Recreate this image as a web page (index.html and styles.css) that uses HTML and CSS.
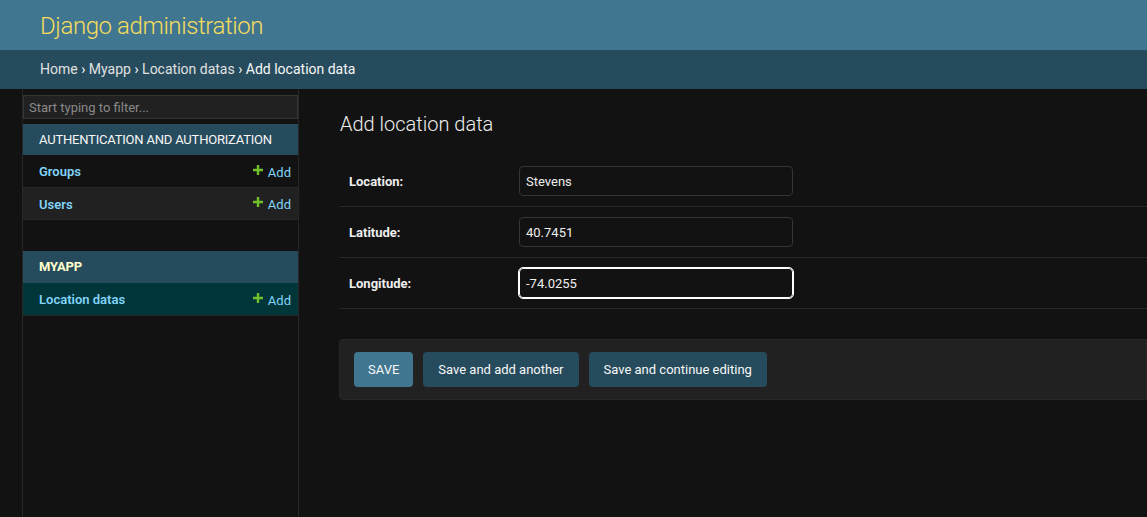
FILE: index.html
```html
<!DOCTYPE html>
<html lang="en">
<head>
<meta charset="utf-8">
<title>Add location data | Django site admin</title>
<link rel="stylesheet" href="styles.css">
</head>
<body>
<div class="container">
  <header class="header">
    <div class="branding">Django administration</div>
  </header>
  <nav class="breadcrumbs"><a href="#">Home</a> › <a href="#">Myapp</a> › <a href="#">Location datas</a> › Add location data</nav>
  <div class="main">
    <div class="toggle-nav"></div>
    <aside class="sidebar">
      <input class="nav-filter" type="search" placeholder="Start typing to filter...">
      <table class="module">
        <caption class="caption">AUTHENTICATION AND AUTHORIZATION</caption>
        <tbody>
          <tr class="row">
            <th class="row-name"><a href="#">Groups</a></th>
            <td class="row-add"><a href="#" class="addlink"><svg class="plus" viewBox="0 0 10 10" width="10" height="10"><path d="M3.8 0h2.4v3.8H10v2.4H6.2V10H3.8V6.2H0V3.8h3.8z" fill="#70bf2b"/></svg>Add</a></td>
          </tr>
          <tr class="row row-hover">
            <th class="row-name"><a href="#">Users</a></th>
            <td class="row-add"><a href="#" class="addlink"><svg class="plus" viewBox="0 0 10 10" width="10" height="10"><path d="M3.8 0h2.4v3.8H10v2.4H6.2V10H3.8V6.2H0V3.8h3.8z" fill="#70bf2b"/></svg>Add</a></td>
          </tr>
        </tbody>
      </table>
      <table class="module">
        <caption class="caption current">MYAPP</caption>
        <tbody>
          <tr class="row row-selected">
            <th class="row-name"><a href="#">Location datas</a></th>
            <td class="row-add"><a href="#" class="addlink"><svg class="plus" viewBox="0 0 10 10" width="10" height="10"><path d="M3.8 0h2.4v3.8H10v2.4H6.2V10H3.8V6.2H0V3.8h3.8z" fill="#70bf2b"/></svg>Add</a></td>
          </tr>
        </tbody>
      </table>
    </aside>
    <main class="content">
      <h1 class="title">Add location data</h1>
      <form class="form">
        <div class="form-row">
          <label class="label">Location:</label>
          <input class="field" type="text" value="Stevens">
        </div>
        <div class="form-row">
          <label class="label">Latitude:</label>
          <input class="field" type="text" value="40.7451">
        </div>
        <div class="form-row">
          <label class="label">Longitude:</label>
          <input class="field field-focus" type="text" value="-74.0255">
        </div>
        <div class="submit-row">
          <button type="button" class="btn btn-default">SAVE</button>
          <button type="button" class="btn">Save and add another</button>
          <button type="button" class="btn">Save and continue editing</button>
        </div>
      </form>
    </main>
  </div>
</div>
</body>
</html>
```

FILE: styles.css
```css
* { box-sizing: border-box; }
html, body {
  margin: 0;
  padding: 0;
  height: 100%;
  overflow: hidden;
}
body {
  background: #121212;
  color: #eeeeee;
  font-family: Roboto, "Noto Sans", "Liberation Sans", sans-serif;
  font-size: 14px;
}
a { text-decoration: none; }

.container {
  display: flex;
  flex-direction: column;
  height: 100%;
}

.header {
  background: #417690;
  height: 50px;
  padding: 0 40px;
  display: flex;
  align-items: center;
}
.branding {
  color: #f5dd5d;
  font-size: 24px;
  font-weight: 300;
  line-height: 30px;
  letter-spacing: -0.4px;
  margin-top: 2px;
}

.breadcrumbs {
  background: #264b5d;
  color: #f7f7f7;
  height: 39px;
  padding: 10px 40px;
  font-size: 14px;
  line-height: 19px;
}
.breadcrumbs a { color: #e0e0e0; }

.main {
  flex: 1;
  display: flex;
  min-height: 0;
}
.toggle-nav {
  width: 23px;
  flex: none;
  border-right: 1px solid #272727;
}
.sidebar {
  width: 276px;
  flex: none;
  border-right: 1px solid #272727;
  display: flex;
  flex-direction: column;
}
.nav-filter {
  width: 100%;
  height: 24px;
  margin: 6px 0 5px;
  padding: 2px 5px;
  border: 1px solid #353535;
  background: #212121;
  color: #eeeeee;
  font-family: inherit;
  font-size: 13px;
  outline: none;
}
.nav-filter::placeholder { color: #8a8a8a; }

.module {
  width: 100%;
  border-collapse: collapse;
  margin-bottom: 31px;
}
.caption {
  background: #264b5d;
  color: #f7f7f7;
  font-size: 13px;
  font-weight: 400;
  text-align: left;
  height: 31px;
  padding: 8px 16px;
  line-height: 16px;
  letter-spacing: -0.2px;
}
.caption.current {
  color: #ffffcc;
  font-weight: 700;
  height: 32px;
}
.row { border-bottom: 1px solid #272727; }
.row-hover { background: #212121; }
.row-selected { background: #00363a; }
.row-name {
  text-align: left;
  padding: 9px 0 6px 16px;
  height: 32px;
  font-size: 13px;
  font-weight: 600;
  line-height: 16px;
}
.row-selected .row-name { height: 33px; }
.row-name a { color: #81d4fa; }
.row-add {
  text-align: right;
  padding: 9px 7px 6px 0;
  font-size: 13px;
}
.addlink {
  color: #81d4fa;
  display: inline-flex;
  align-items: center;
  gap: 5px;
}
.plus { position: relative; top: -2px; }

.content {
  flex: 1;
  padding: 23px 0 0 40px;
  min-width: 0;
}
.title {
  margin: 0 0 20px 1px;
  font-size: 20px;
  font-weight: 300;
  line-height: 24px;
  color: #eeeeee;
}
.form-row {
  display: flex;
  align-items: center;
  padding: 10px;
  border-bottom: 1px solid #272727;
}
.label {
  width: 170px;
  flex: none;
  font-size: 13px;
  font-weight: 700;
  color: #eeeeee;
}
.field {
  width: 274px;
  height: 30px;
  padding: 5px 6px;
  border: 1px solid #353535;
  border-radius: 4px;
  background: #121212;
  color: #eeeeee;
  font-family: inherit;
  font-size: 13px;
  outline: none;
}
.field-focus {
  border-color: #ffffff;
  outline: 1px solid #ffffff;
}
.submit-row {
  margin-top: 30px;
  padding: 12px 14px;
  background: #212121;
  border: 1px solid #272727;
  border-radius: 4px 0 0 4px;
  display: flex;
  gap: 10px;
}
.btn {
  height: 35px;
  padding: 0 15px;
  border: none;
  border-radius: 4px;
  background: #264b5d;
  color: #f7f7f7;
  font-family: inherit;
  font-size: 13px;
  line-height: 15px;
}
.btn-default { background: #417690; padding: 0 14px; }
```
